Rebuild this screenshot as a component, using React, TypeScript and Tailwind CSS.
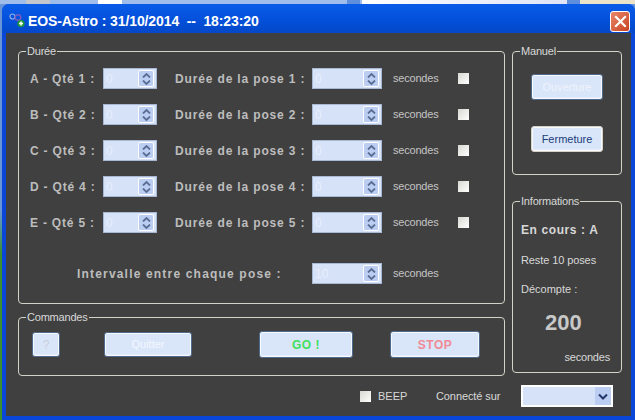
import React from 'react';

const body = { fontFamily: '"Liberation Sans", Arial, sans-serif' };

const Arrows = () => (
  <span className="flex h-full w-[16px] flex-col items-center justify-center gap-[2px] rounded-[2px] border border-white bg-[#bccdf2]">
    <svg width="9" height="5" viewBox="0 0 9 5">
      <path d="M1 4.5 L4.5 1 L8 4.5" fill="none" stroke="#5a6e94" strokeWidth="1.8" />
    </svg>
    <svg width="9" height="5" viewBox="0 0 9 5">
      <path d="M1 .5 L4.5 4 L8 .5" fill="none" stroke="#5a6e94" strokeWidth="1.8" />
    </svg>
  </span>
);

const Spinner = ({ value = '0', width }: { value?: string; width: string }) => (
  <div className={`flex h-[21px] ${width} shrink-0 items-center justify-between border border-[#a9b8d2] bg-[#d6e2f8] pl-[2px] pr-[2px] py-[1px] text-[12px] text-[#e8eefb]`}>
    <span>{value}</span>
    <Arrows />
  </div>
);

const Check = () => <span className="block h-[11px] w-[11px] shrink-0 bg-gradient-to-br from-[#d8d8d2] to-[#ffffff]" />;

const rows = [
  { a: 'A - Qté 1 :', b: 'Durée de la pose 1 :' },
  { a: 'B - Qté 2 :', b: 'Durée de la pose 2 :' },
  { a: 'C - Qté 3 :', b: 'Durée de la pose 3 :' },
  { a: 'D - Qté 4 :', b: 'Durée de la pose 4 :' },
  { a: 'E - Qté 5 :', b: 'Durée de la pose 5 :' },
];

const Group = ({ title, className, children }: { title: string; className: string; children: React.ReactNode }) => (
  <fieldset className={`rounded-[4px] border border-[#d3d3c8] ${className}`}>
    <legend className="ml-[7px] px-[1px] text-[11px] leading-[11px] tracking-[-0.2px] text-[#d8d8d8]">{title}</legend>
    {children}
  </fieldset>
);

const Btn = ({ label, className, text }: { label: string; className: string; text: string }) => (
  <button className={`flex items-center justify-center rounded-[3px] border border-[#4f6a8c] bg-[#d9e5f9] shadow-[inset_0_0_0_1px_#f6f9ff,inset_0_-2px_0_#e6edf9] ${className} ${text}`}>
    {label}
  </button>
);

export default function App() {
  return (
    <div className="flex h-[420px] w-[635px] flex-col overflow-hidden bg-gradient-to-b from-[#6a94d8] from-50% to-[#3f8f2c] to-60%" style={body}>
      <div className="flex h-[4px] shrink-0 bg-[#9fbdea]">
        <span className="ml-[26px] w-[24px] bg-[#c4c8cc]" />
        <span className="ml-[48px] w-[24px] bg-white" />
        <span className="ml-[225px] w-[13px] bg-[#5f8fdc]" />
        <span className="ml-[2px] w-[205px] bg-gradient-to-r from-white to-[#dfe4f6]" />
        <span className="w-[13px] bg-[#5f8fdc]" />
        <span className="flex-1 bg-[#ece4c8]" />
      </div>
      <div className="ml-[2px] flex h-[416px] w-[633px] flex-col rounded-t-[7px] bg-[#0a46d8]">
        <div className="flex h-[29px] shrink-0 items-center justify-between rounded-t-[7px] bg-gradient-to-b from-[#0a5ce8] via-[#0451dc] to-[#0348c8] pl-[6px] pr-[5px] pt-[5px]">
          <div className="flex items-center">
            <svg width="20" height="16" viewBox="0 0 20 16">
              <circle cx="4.5" cy="3.5" r="2.5" fill="none" stroke="#8fb0e8" strokeWidth="1.2" />
              <circle cx="10" cy="4.5" r="2.8" fill="none" stroke="#7a5cc0" strokeWidth="1.4" />
              <circle cx="13" cy="10.5" r="3.6" fill="#1f9a3a" />
              <path d="M13 8.5v4M11 10.5h4" stroke="#fff" strokeWidth="1.5" />
            </svg>
            <span className="text-[14px] font-bold tracking-[-0.1px] whitespace-pre text-white">EOS-Astro : 31/10/2014  --  18:23:20</span>
          </div>
          <div className="flex h-[21px] w-[20px] items-center justify-center rounded-[3px] border border-white bg-gradient-to-br from-[#e8866a] to-[#c8401c]">
            <svg width="13" height="13" viewBox="0 0 13 13">
              <path d="M2 2 L11 11 M11 2 L2 11" stroke="#fff" strokeWidth="2.2" strokeLinecap="square" />
            </svg>
          </div>
        </div>

        <div className="mx-[4px] mb-[4px] flex flex-1 flex-col bg-[#404040] pl-[12px] pt-[13px] pr-[9px]">
          <div className="flex gap-[7px]">
            <div className="flex w-[487px] flex-col gap-[8px]">
              <Group title="Durée" className="h-[258px]">
                <div className="pl-[11px]">
                  <div className="flex flex-col gap-[15px] pt-[11px]">
                    {rows.map((r) => (
                      <div key={r.a} className="flex h-[21px] items-center">
                        <span className="w-[73px] shrink-0 text-[12px] font-bold tracking-[0.8px] text-[#bdbdbd]">{r.a}</span>
                        <Spinner width="w-[54px]" />
                        <span className="ml-[18px] w-[137px] shrink-0 text-[12px] font-bold tracking-[0.85px] whitespace-nowrap text-[#bdbdbd]">{r.b}</span>
                        <Spinner width="w-[70px]" />
                        <span className="ml-[11px] w-[65px] shrink-0 text-[11px] tracking-[-0.2px] text-[#c4c4c4]">secondes</span>
                        <Check />
                      </div>
                    ))}
                  </div>
                  <div className="mt-[30px] flex h-[21px] items-center">
                    <span className="ml-[47px] w-[235px] shrink-0 text-[12px] font-bold tracking-[1.18px] whitespace-nowrap text-[#bdbdbd]">Intervalle entre chaque pose :</span>
                    <Spinner value="10" width="w-[70px]" />
                    <span className="ml-[11px] text-[11px] tracking-[-0.2px] text-[#c4c4c4]">secondes</span>
                  </div>
                </div>
              </Group>
              <Group title="Commandes" className="h-[64px]">
                <div className="flex items-center pl-[13px] pt-[8px]">
                  <Btn label="?" className="h-[25px] w-[28px]" text="text-[12px] text-[#c9cfdc]" />
                  <Btn label="Quitter" className="ml-[44px] h-[25px] w-[88px]" text="text-[11px] text-[#f4f7ff]" />
                  <Btn label="GO !" className="ml-[67px] h-[27px] w-[94px]" text="text-[12px] font-bold tracking-[0.5px] text-[#3fe05c]" />
                  <Btn label="STOP" className="ml-[37px] h-[27px] w-[90px]" text="text-[12px] font-bold tracking-[0.5px] text-[#f08a96]" />
                </div>
              </Group>
            </div>

            <div className="flex w-[110px] flex-col gap-[21px]">
              <Group title="Manuel" className="flex h-[129px] flex-col items-center gap-[26px] pt-[17px]">
                <Btn label="Ouverture" className="h-[26px] w-[72px]" text="text-[11px] text-[#f0f4fc]" />
                <Btn label="Fermeture" className="h-[26px] w-[72px] border-[#d6d2c4]" text="text-[11px] text-[#1b3d7a]" />
              </Group>
              <Group title="Informations" className="flex h-[177px] flex-col">
                <div className="flex flex-col pl-[8px] pr-[11px]">
                  <span className="mt-[14px] text-[12px] font-bold tracking-[0.6px] text-[#d8d8d8]">En cours : A</span>
                  <span className="mt-[13px] text-[11px] tracking-[-0.1px] text-[#d8d8d8]">Reste 10 poses</span>
                  <span className="mt-[12px] text-[11px] text-[#d8d8d8]">Décompte :</span>
                  <span className="mt-[13px] pl-[24px] text-[22px] font-bold leading-[26px] text-[#c8c8c8]">200</span>
                  <span className="mt-[13px] text-right text-[11px] tracking-[-0.2px] text-[#d8d8d8]">secondes</span>
                </div>
              </Group>
            </div>
          </div>

          <div className="mt-[9px] flex items-center pl-[342px]">
            <Check />
            <span className="ml-[7px] w-[58px] shrink-0 text-[11px] text-[#d8d8d8]">BEEP</span>
            <span className="w-[85px] shrink-0 text-[11px] tracking-[-0.1px] text-[#d8d8d8]">Connecté sur</span>
            <div className="flex h-[22px] w-[92px] shrink-0 justify-end border-2 border-white bg-[#d6e2f8]">
              <span className="flex w-[16px] items-center justify-center bg-[#bccdf2]">
                <svg width="10" height="7" viewBox="0 0 10 7">
                  <path d="M1 1.5 L5 5.5 L9 1.5" fill="none" stroke="#22386a" strokeWidth="2" />
                </svg>
              </span>
            </div>
          </div>
        </div>
      </div>
    </div>
  );
}
